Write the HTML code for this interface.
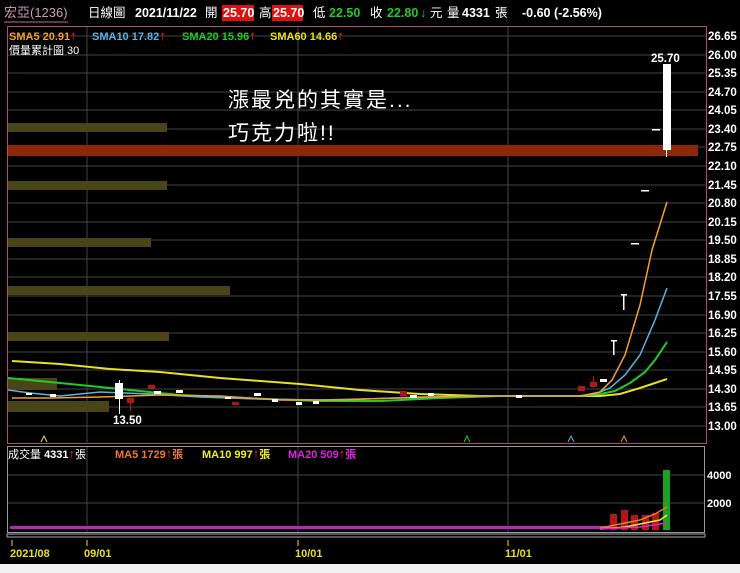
<!DOCTYPE html>
<html><head><meta charset="utf-8"><style>
html,body{margin:0;padding:0;background:#000;width:740px;height:573px;overflow:hidden}
svg{display:block}
text{font-family:"Liberation Sans","Noto Sans CJK TC",sans-serif}
</style></head><body>
<svg width="740" height="573" viewBox="0 0 740 573" xmlns="http://www.w3.org/2000/svg">
<rect width="740" height="573" fill="#000"/>
<rect x="0" y="564" width="740" height="9" fill="#f2f2f2"/>
<g font-size="12.5" font-weight="bold">
<text x="4" y="17" fill="#c8a0b4" font-weight="normal" font-size="13">宏亞(1236)</text>
<line x1="4" y1="22" x2="68" y2="22" stroke="#c8609a" stroke-width="1"/>
<text x="88" y="17" fill="#fff" font-weight="normal">日線圖</text>
<text x="135" y="17" fill="#fff">2021/11/22</text>
<text x="205" y="17" fill="#fff" font-weight="normal">開</text>
<rect x="222" y="5" width="32" height="16" fill="#e01010"/>
<text x="223" y="17" fill="#fff">25.70</text>
<text x="259" y="17" fill="#fff" font-weight="normal">高</text>
<rect x="272" y="5" width="31" height="16" fill="#e01010"/>
<text x="273" y="17" fill="#fff">25.70</text>
<text x="313" y="17" fill="#fff" font-weight="normal">低</text>
<text x="329" y="17" fill="#22cc22">22.50</text>
<text x="370" y="17" fill="#fff" font-weight="normal">收</text>
<text x="387" y="17" fill="#22cc22">22.80</text>
<text x="420" y="17" fill="#22cc22">↓</text>
<text x="430" y="17" fill="#fff" font-weight="normal">元</text>
<text x="447" y="17" fill="#fff" font-weight="normal">量</text>
<text x="462" y="17" fill="#fff">4331</text>
<text x="495" y="17" fill="#fff" font-weight="normal">張</text>
<text x="522" y="17" fill="#fff">-0.60 (-2.56%)</text>
</g>
<rect x="7.5" y="26.5" width="699" height="417" fill="none" stroke="#b04878"/>
<g stroke="#444" stroke-width="1">
<line x1="8" y1="36" x2="706" y2="36"/><line x1="8" y1="55" x2="706" y2="55"/><line x1="8" y1="73" x2="706" y2="73"/><line x1="8" y1="92" x2="706" y2="92"/><line x1="8" y1="110" x2="706" y2="110"/><line x1="8" y1="129" x2="706" y2="129"/><line x1="8" y1="147" x2="706" y2="147"/><line x1="8" y1="166" x2="706" y2="166"/><line x1="8" y1="185" x2="706" y2="185"/><line x1="8" y1="203" x2="706" y2="203"/><line x1="8" y1="222" x2="706" y2="222"/><line x1="8" y1="240" x2="706" y2="240"/><line x1="8" y1="259" x2="706" y2="259"/><line x1="8" y1="277" x2="706" y2="277"/><line x1="8" y1="296" x2="706" y2="296"/><line x1="8" y1="315" x2="706" y2="315"/><line x1="8" y1="333" x2="706" y2="333"/><line x1="8" y1="352" x2="706" y2="352"/><line x1="8" y1="370" x2="706" y2="370"/><line x1="8" y1="389" x2="706" y2="389"/><line x1="8" y1="407" x2="706" y2="407"/><line x1="8" y1="426" x2="706" y2="426"/>
<line x1="87" y1="27" x2="87" y2="443"/><line x1="298" y1="27" x2="298" y2="443"/><line x1="508" y1="27" x2="508" y2="443"/>
</g>
<g font-size="11.5" font-weight="bold" fill="#fff">
<text x="708" y="40">26.65</text><text x="708" y="59">26.00</text><text x="708" y="77">25.35</text><text x="708" y="96">24.70</text><text x="708" y="114">24.05</text><text x="708" y="133">23.40</text><text x="708" y="151">22.75</text><text x="708" y="170">22.10</text><text x="708" y="189">21.45</text><text x="708" y="207">20.80</text><text x="708" y="226">20.15</text><text x="708" y="244">19.50</text><text x="708" y="263">18.85</text><text x="708" y="281">18.20</text><text x="708" y="300">17.55</text><text x="708" y="319">16.90</text><text x="708" y="337">16.25</text><text x="708" y="356">15.60</text><text x="708" y="374">14.95</text><text x="708" y="393">14.30</text><text x="708" y="411">13.65</text><text x="708" y="430">13.00</text>
</g>
<g font-size="11" font-weight="bold">
<text x="9" y="40" fill="#f0a030">SMA5 20.91<tspan fill="#ff2020" font-size="13">↑</tspan></text>
<text x="92" y="40" fill="#5ab4e0">SMA10 17.82<tspan fill="#ff2020" font-size="13">↑</tspan></text>
<text x="182" y="40" fill="#22cc22">SMA20 15.96<tspan fill="#ff2020" font-size="13">↑</tspan></text>
<text x="270" y="40" fill="#e8e020">SMA60 14.66<tspan fill="#ff2020" font-size="13">↑</tspan></text>
<text x="9" y="54" fill="#fff" font-weight="normal">價量累計圖 30</text>
</g>
<g fill="#4a4518">
<rect x="8" y="123" width="159" height="9"/><rect x="8" y="181" width="159" height="9"/><rect x="8" y="238" width="143" height="9"/><rect x="8" y="286" width="222" height="9"/><rect x="8" y="332" width="161" height="9"/><rect x="8" y="378" width="49" height="12"/><rect x="8" y="401" width="101" height="11"/>
</g>
<rect x="8" y="145" width="690" height="11" fill="#8a2808"/>
<g font-family="'Noto Serif CJK SC','Liberation Serif',serif" font-size="21" fill="#fff">
<text x="228" y="107" letter-spacing="2">漲最兇的其實是...</text>
<text x="228" y="140" letter-spacing="2">巧克力啦!!</text>
</g>
<polyline fill="none" stroke="#e8e020" stroke-width="2" points="12,361 60,364 110,369 160,372 220,378 300,384 360,390 420,394 480,396 540,396 600,396 620,394 640,388 655,383 667,379"/>
<polyline fill="none" stroke="#22cc22" stroke-width="2" points="8,378 50,382 110,388 180,395 240,398 320,401 380,401 440,398 500,396 580,396 600,394 615,391 630,383 645,372 655,360 667,342"/>
<polyline fill="none" stroke="#5ab4e0" stroke-width="1.5" points="8,390 30,393 60,396 100,392 150,394 200,397 260,399 320,400 400,398 480,396 580,396 595,394 610,388 625,375 640,355 655,320 667,288"/>
<polyline fill="none" stroke="#f0a030" stroke-width="1.5" points="12,398 50,398 100,397 160,395 220,396 280,400 340,400 420,397 500,396 580,396 590,394 600,392 612,380 625,355 640,305 652,250 667,202"/>
<g fill="#fff">
<rect x="115" y="383" width="8" height="16"/><rect x="26" y="393" width="6" height="2"/><rect x="50" y="394" width="6" height="3"/><rect x="154" y="391" width="7" height="3"/><rect x="176" y="390" width="7" height="3"/><rect x="225" y="397" width="6" height="2"/><rect x="254" y="393" width="7" height="3"/><rect x="272" y="399" width="6" height="3"/><rect x="296" y="402" width="6" height="3"/><rect x="313" y="401" width="6" height="3"/><rect x="410" y="395" width="7" height="3"/><rect x="428" y="393" width="6" height="3"/><rect x="516" y="395" width="6" height="3"/>
<rect x="600" y="379" width="7" height="3"/><rect x="663" y="64" width="8" height="86"/>
<rect x="652" y="129" width="8" height="1.5"/><rect x="641" y="190" width="8" height="1.5"/><rect x="631" y="243" width="8" height="1.5"/>
<rect x="621" y="294" width="6" height="1.5"/><rect x="623" y="294" width="1.5" height="16"/>
<rect x="611" y="340" width="6" height="1.5"/><rect x="613" y="340" width="1.5" height="15"/>
<rect x="119" y="380" width="1" height="34"/>
</g>
<rect x="666" y="150" width="1" height="7" fill="#fff"/>
<g fill="#b01818">
<rect x="127" y="398" width="7" height="5"/><rect x="130" y="403" width="1" height="8"/><rect x="148" y="385" width="7" height="4"/><rect x="232" y="402" width="7" height="3"/><rect x="400" y="391" width="7" height="5"/><rect x="578" y="386" width="7" height="5"/><rect x="590" y="382" width="7" height="5"/><rect x="593" y="376" width="1" height="6"/>
</g>
<text x="113" y="424" font-size="11.5" font-weight="bold" fill="#fff">13.50</text>
<text x="651" y="62" font-size="11.5" font-weight="bold" fill="#fff">25.70</text>
<g fill="none" stroke-width="1">
<polyline points="41,442 44,436 47,442" stroke="#e8e020"/>
<polyline points="464,442 467,436 470,442" stroke="#22cc22"/>
<polyline points="568,442 571,436 574,442" stroke="#5ab4e0"/>
<polyline points="621,442 624,436 627,442" stroke="#f0a030"/>
</g>
<rect x="7.5" y="446.5" width="697" height="86" fill="none" stroke="#999"/>
<line x1="8" y1="475" x2="704" y2="475" stroke="#444"/><line x1="8" y1="503" x2="704" y2="503" stroke="#444"/>
<line x1="87" y1="447" x2="87" y2="532" stroke="#444"/><line x1="298" y1="447" x2="298" y2="532" stroke="#444"/><line x1="508" y1="447" x2="508" y2="532" stroke="#444"/>
<g font-size="11" font-weight="bold">
<text x="8" y="458" fill="#fff" font-weight="normal">成交量 <tspan font-weight="bold">4331</tspan><tspan fill="#ff2020" font-size="13">↑</tspan>張</text>
<text x="115" y="458" fill="#f07830">MA5 1729<tspan fill="#ff2020" font-size="13">↑</tspan>張</text>
<text x="202" y="458" fill="#f0f020">MA10 997<tspan fill="#ff2020" font-size="13">↑</tspan>張</text>
<text x="288" y="458" fill="#e020e0">MA20 509<tspan fill="#ff2020" font-size="13">↑</tspan>張</text>
<text x="707" y="479" fill="#fff">4000</text>
<text x="707" y="507" fill="#fff">2000</text>
</g>
<rect x="663" y="470" width="7" height="60" fill="#20a020"/>
<g fill="#b01818">
<rect x="610" y="514" width="7" height="16"/><rect x="621" y="510" width="7" height="20"/><rect x="631" y="515" width="7" height="15"/><rect x="642" y="515" width="7" height="15"/><rect x="652" y="513" width="7" height="17"/>
</g>
<rect x="10" y="526" width="600" height="3" fill="#c020c0"/>
<polyline fill="none" stroke="#f07830" stroke-width="1.5" points="600,528 620,524 640,520 655,514 667,507"/>
<polyline fill="none" stroke="#f0f020" stroke-width="1.5" points="600,529 625,527 645,523 660,520 667,515"/>
<polyline fill="none" stroke="#e020e0" stroke-width="1.5" points="600,529 640,527 667,523"/>
<rect x="7" y="534" width="698" height="3" fill="none" stroke="#aaa"/>
<g stroke="#e8e020"><line x1="12" y1="540" x2="12" y2="546"/><line x1="87" y1="540" x2="87" y2="546"/><line x1="298" y1="540" x2="298" y2="546"/><line x1="508" y1="540" x2="508" y2="546"/></g>
<g font-size="11" font-weight="bold" fill="#e8e020">
<text x="10" y="557">2021/08</text><text x="84" y="557">09/01</text><text x="295" y="557">10/01</text><text x="505" y="557">11/01</text>
</g>
</svg>
</body></html>
